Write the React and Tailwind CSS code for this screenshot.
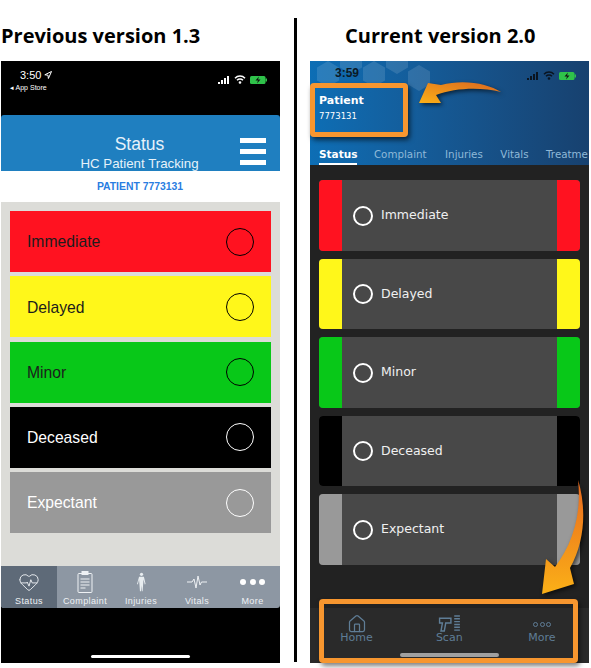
import { HeartPulse, House } from "lucide-react";

const oldRows = [
  { name: "Immediate", bg: "bg-[#ff1220]" },
  { name: "Delayed", bg: "bg-[#fff71a]" },
  { name: "Minor", bg: "bg-[#08c818]" },
  { name: "Deceased", bg: "bg-black", text: "text-white", ring: "border-white" },
  { name: "Expectant", bg: "bg-[#999999]", text: "text-white", ring: "border-white" },
];

const newRows = [
  { name: "Immediate", bg: "bg-[#ff1220]" },
  { name: "Delayed", bg: "bg-[#fff71a]" },
  { name: "Minor", bg: "bg-[#08c818]" },
  { name: "Deceased", bg: "bg-black" },
  { name: "Expectant", bg: "bg-[#999999]" },
];

// honeycomb behind the new app's status bar
const hexCentres = [[18, 13], [41, 0], [64, 13], [87, 0], [109, 17]];

function hexPoints(cx, cy) {
  return [[0, -13], [11, -6.5], [11, 6.5], [0, 13], [-11, 6.5], [-11, -6.5]]
    .map(([x, y]) => `${cx + x},${cy + y}`)
    .join(" ");
}

function BodyIcon() {
  return (
    <svg width="13" height="20" viewBox="0 0 16 24" fill="#e8edf0">
      <circle cx="8" cy="2.5" r="2" />
      <path d="M5 5.5h6l2 9-1 .5-1.500-6-.5 6-.6 8.500H8.500L8 16l-.5 7.500H6.100L5.500 15l-.5-6-1.500 6-1-.5z" />
    </svg>
  );
}

function StatusBar() {
  return (
    <div className="flex items-center gap-[4px]">
      <svg width="12" height="8" viewBox="0 0 12 8" fill="currentColor">
        <rect x="0" y="6" width="2" height="2" />
        <rect x="3" y="4" width="2" height="4" />
        <rect x="6" y="2" width="2" height="6" />
        <rect x="9" y="0" width="2" height="8" />
      </svg>
      <svg width="12" height="9" viewBox="0 0 12 9" fill="none" stroke="currentColor" strokeWidth="1.500">
        <path d="M1 3.200a7 7 0 0 1 10 0M3 5.200a4.200 4.200 0 0 1 6 0" />
        <circle cx="6" cy="7.500" r=".6" fill="currentColor" />
      </svg>
      <svg width="17" height="8" viewBox="0 0 17 8">
        <rect x="0" y="0" width="15.500" height="8" rx="1.500" fill="#2fc24a" />
        <rect x="15.500" y="2.500" width="1.500" height="3" fill="#2fc24a" />
        <path d="M9 0.500 5.500 4.500H8L7 7.500 10.500 3.500H8z" fill="#111" />
      </svg>
    </div>
  );
}

function OldPhone() {
  return (
    <div className="ml-px w-[279px] h-[602px] bg-black flex flex-col">
      <div className="h-[54px] px-[19px] pt-[7px] flex justify-between text-white font-['Liberation_Sans',sans-serif]">
        <div>
          <div className="flex items-center gap-[3px] text-[11px] leading-[14px]">
            3:50
            <svg width="8" height="8" viewBox="0 0 8 8" fill="none" stroke="white" strokeWidth="1">
              <path d="M7.500.5.800 3.800 4 4.200 4.400 7.500z" />
            </svg>
          </div>
          <div className="-ml-[10px] mt-px text-[7px] leading-[10px]">◂ App Store</div>
        </div>
        <div className="mt-[7px] -mr-[6px] h-[10px]">
          <StatusBar />
        </div>
      </div>

      <div className="relative h-[56px] bg-[#1f7fc0] rounded-t-[3px] flex flex-col items-center pt-[19px] text-[#e6f2fa] font-['Liberation_Sans',sans-serif]">
        <div className="text-[17.500px] leading-[21px] pr-[2px]">Status</div>
        <div className="text-[13.300px] leading-[16px] mt-[1px] pr-[2px]">HC Patient Tracking</div>
        <div className="absolute right-[14px] top-[23px] w-[26px] flex flex-col gap-[6px]">
          <div className="h-[5px] bg-white"></div>
          <div className="h-[5px] bg-white"></div>
          <div className="h-[5px] bg-white"></div>
        </div>
      </div>

      <div className="h-[31px] bg-white flex items-center justify-center pr-[1px] text-[10.400px] font-bold text-[#2a7de1] font-['Liberation_Sans',sans-serif]">
        PATIENT 7773131
      </div>

      <div className="h-[364px] bg-[#dcdcd8] px-[9px] pt-[9px] flex flex-col gap-[4.300px] font-['Liberation_Sans',sans-serif]">
        {oldRows.map((r) => (
          <div key={r.name} className={`${r.bg} h-[61px] flex items-center justify-between pl-[17px] pr-[17px] ${r.text || "text-[#1c1c1c]"}`}>
            <span className="text-[15.700px] pt-px">{r.name}</span>
            <span className={`w-[28px] h-[28px] rounded-full border ${r.ring || "border-black"}`}></span>
          </div>
        ))}
      </div>

      <div className="h-[42px] bg-[#8d97a3] rounded-b-[3px] flex text-[#eef1f4] text-[9px] tracking-[0.4px] font-['Liberation_Sans',sans-serif]">
        <div className="w-[56px] bg-[#5e6a78] flex flex-col items-center pt-[5px] rounded-bl-[3px]">
          <div className="h-[24px] flex items-center"><HeartPulse size={22} strokeWidth={1} /></div>
          <span className="mt-[1px]">Status</span>
        </div>
        <div className="w-[56px] flex flex-col items-center pt-[5px]">
          <div className="h-[24px] flex items-center">
            <svg width="16" height="22" viewBox="0 0 16 22" fill="none" stroke="#eef1f4" strokeWidth="1">
              <rect x="1" y="2.500" width="14" height="19" rx="1" />
              <rect x="5" y="0.500" width="6" height="3" fill="#eef1f4" />
              <path d="M3.500 8h9M3.500 11h9M3.500 14h9M3.500 17h5" />
            </svg>
          </div>
          <span className="mt-[1px]">Complaint</span>
        </div>
        <div className="w-[56px] flex flex-col items-center pt-[5px]">
          <div className="h-[24px] flex items-center"><BodyIcon /></div>
          <span className="mt-[1px]">Injuries</span>
        </div>
        <div className="w-[56px] flex flex-col items-center pt-[5px]">
          <div className="h-[24px] flex items-center">
            <svg width="20" height="14" viewBox="0 0 20 14" fill="none" stroke="#eef1f4" strokeWidth="1">
              <path d="M0 7h5l2-3 2 9 2-12 2 9 1.500-3H20" />
            </svg>
          </div>
          <span className="mt-[1px]">Vitals</span>
        </div>
        <div className="w-[55px] flex flex-col items-center pt-[5px]">
          <div className="h-[24px] flex items-center gap-[3.500px]">
            <span className="w-[6px] h-[6px] rounded-full bg-white"></span>
            <span className="w-[6px] h-[6px] rounded-full bg-white"></span>
            <span className="w-[6px] h-[6px] rounded-full bg-white"></span>
          </div>
          <span className="mt-[1px]">More</span>
        </div>
      </div>

      <div className="flex-1 flex items-end justify-center pb-[5px]">
        <div className="w-[99px] h-[3px] bg-white rounded-full"></div>
      </div>
    </div>
  );
}

function NewPhone() {
  return (
    <div className="w-[279px] h-[602px] bg-[#222222] flex flex-col font-['DejaVu_Sans',sans-serif]">
      <div className="relative h-[104px] bg-gradient-to-r from-[#0d6eb5] to-[#17416f] overflow-hidden">
        <svg className="absolute left-0 top-0" width="130" height="40" viewBox="0 0 130 40" fill="#ffffff" fillOpacity=".12">
          {hexCentres.map(([x, y]) => (
            <polygon key={x} points={hexPoints(x, y)} />
          ))}
        </svg>
        <div className="relative flex justify-between pl-[25px] pr-[13px] pt-[5px]">
          <span className="text-[12px] leading-[14px] font-bold text-[#0b1a26] font-['Liberation_Sans',sans-serif]">3:59</span>
          <div className="mt-[5px] text-[#0a1420]"><StatusBar /></div>
        </div>
        <div className="relative pl-[9px] mt-[14px] text-white">
          <div className="text-[11px] leading-[14px] font-bold">Patient</div>
          <div className="text-[8.500px] leading-[12px] mt-[2px]">7773131</div>
        </div>
        <div className="absolute bottom-0 left-[9px] w-max flex items-end gap-[17.500px] whitespace-nowrap text-[10.300px] leading-[13px] text-[#8fb9d8]">
          <div className="text-white font-bold text-[10.500px] pb-[2px] border-b-2 border-white -mr-[1px]">Status</div>
          <span className="pb-[4px] mr-px">Complaint</span>
          <span className="pb-[4px]">Injuries</span>
          <span className="pb-[4px]">Vitals</span>
          <span className="pb-[4px]">Treatme</span>
        </div>
      </div>

      <div className="px-[9px] pt-[15px] flex flex-col gap-[8px]">
        {newRows.map((r) => (
          <div key={r.name} className="h-[70.500px] bg-[#484848] rounded-[4px] overflow-hidden flex items-center justify-between">
            <div className={`w-[23px] h-full ${r.bg}`}></div>
            <div className="flex-1 flex items-center gap-[8px] pl-[11px] pt-px text-[#f0f0f0] text-[12.500px]">
              <span className="w-[20px] h-[20px] rounded-full border-2 border-white"></span>
              {r.name}
            </div>
            <div className={`w-[23px] h-full ${r.bg}`}></div>
          </div>
        ))}
      </div>

      <div className="mt-auto h-[55px] bg-[#2a2a2a] relative flex justify-between pl-[30.500px] pr-[31px] pt-[7px] text-[11px] text-[#5f7d96]">
        <div className="flex flex-col items-center leading-[11px] w-[32px]">
          <div className="h-[17px] flex items-center"><House size={20} strokeWidth={1.500} /></div>
          Home
        </div>
        <div className="flex flex-col items-center leading-[11px] w-[32px]">
          <div className="h-[17px] flex items-center">
            <svg width="23" height="17" viewBox="0 0 24 18" fill="none" stroke="currentColor" strokeWidth="1.500">
              <path d="M1.500 3.500h12v5H8l-1.500 8.500H3L4.500 8.500h-3z" />
              <path d="M17 1h6M17 4h6M17 7h6M17 10h6M17 13h6M17 16h6" />
            </svg>
          </div>
          Scan
        </div>
        <div className="flex flex-col items-center leading-[11px] w-[32px]">
          <div className="h-[17px] flex items-center gap-[1.500px] pt-[1px]">
            <span className="w-[5px] h-[5px] rounded-full border border-current"></span>
            <span className="w-[5px] h-[5px] rounded-full border border-current"></span>
            <span className="w-[5px] h-[5px] rounded-full border border-current"></span>
          </div>
          More
        </div>
        <div className="absolute bottom-[6px] left-[90px] w-[99px] h-[4px] bg-[#a0a0a0] rounded-full"></div>
      </div>
    </div>
  );
}

export default function App() {
  return (
    <div className="relative w-[591px] h-[668px] bg-white overflow-hidden flex">
      <div className="w-[294px]">
        <h2 className="h-[61px] pl-[1px] pt-[22px] text-[20px] leading-[28px] font-bold text-black font-['Open_Sans',sans-serif]">
          Previous version 1.3
        </h2>
        <OldPhone />
      </div>

      <div className="w-[3px] h-[644px] mt-[18px] bg-black"></div>

      <div className="pl-[13px] w-[294px]">
        <h2 className="h-[61px] pl-[35px] pt-[22px] text-[20px] leading-[28px] font-bold text-black font-['Open_Sans',sans-serif]">
          Current version 2.0
        </h2>
        <NewPhone />
      </div>

      {/* annotation boxes and arrows on top of the screenshot */}
      <div className="absolute left-[310px] top-[83px] w-[98px] h-[54px] border-[5px] border-[#f7962f] rounded-[4px] shadow-[2px_3px_5px_rgba(0,0,0,.6)]"></div>
      <div className="absolute left-[319px] top-[599px] w-[259px] h-[64px] border-[5px] border-[#f7962f] rounded-[4px] shadow-[2px_3px_5px_rgba(0,0,0,.5)]"></div>
      <svg className="absolute left-0 top-0 pointer-events-none drop-shadow-[2px_2px_2px_rgba(0,0,0,.6)]" width="591" height="668" viewBox="0 0 591 668">
        <defs>
          <linearGradient id="a1" x1="1" y1="0" x2="0" y2="1">
            <stop offset="0" stopColor="#d9661f" />
            <stop offset="1" stopColor="#fbb017" />
          </linearGradient>
          <linearGradient id="a2" x1="0" y1="0" x2="0" y2="1">
            <stop offset="0" stopColor="#e8691f" />
            <stop offset="1" stopColor="#fbb017" />
          </linearGradient>
        </defs>
        <path d="M501 92C488 84 465 79 441 85L428 83 419 103 441 103 436 95C455 88 480 87 501 92Z" fill="url(#a1)" />
        <path d="M578 480C586 505 586 540 570 568L574 584 542 594 546 559 555 567C572 545 582 515 578 480Z" fill="url(#a2)" />
      </svg>
    </div>
  );
}
